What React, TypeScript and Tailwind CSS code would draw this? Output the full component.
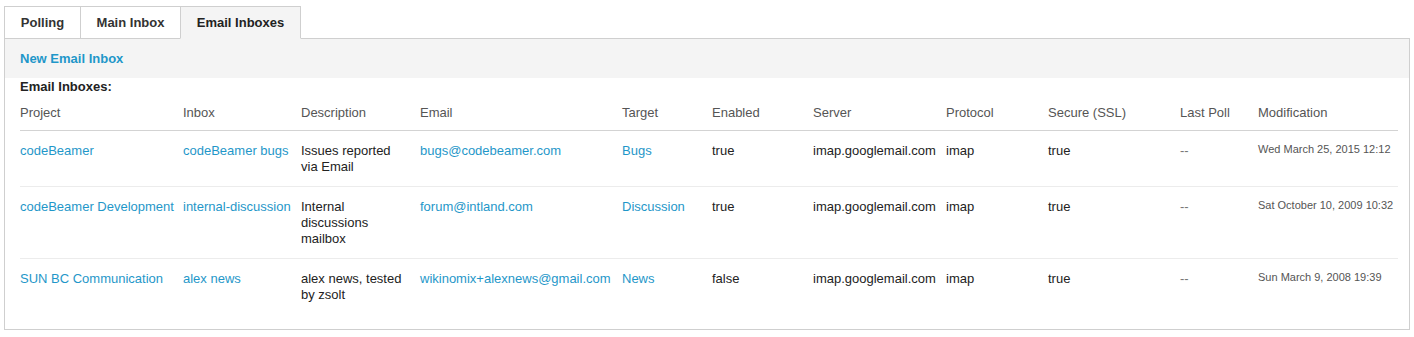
import React from "react";

type Row = {
  project: string;
  inbox: string;
  desc: string;
  email: string;
  target: string;
  enabled: string;
  server: string;
  protocol: string;
  secure: string;
  lastPoll: string;
  mod: string;
};

const rows: Row[] = [
  {
    project: "codeBeamer",
    inbox: "codeBeamer bugs",
    desc: "Issues reported via Email",
    email: "bugs@codebeamer.com",
    target: "Bugs",
    enabled: "true",
    server: "imap.googlemail.com",
    protocol: "imap",
    secure: "true",
    lastPoll: "--",
    mod: "Wed March 25, 2015 12:12",
  },
  {
    project: "codeBeamer Development",
    inbox: "internal-discussion",
    desc: "Internal discussions mailbox",
    email: "forum@intland.com",
    target: "Discussion",
    enabled: "true",
    server: "imap.googlemail.com",
    protocol: "imap",
    secure: "true",
    lastPoll: "--",
    mod: "Sat October 10, 2009 10:32",
  },
  {
    project: "SUN BC Communication",
    inbox: "alex news",
    desc: "alex news, tested by zsolt",
    email: "wikinomix+alexnews@gmail.com",
    target: "News",
    enabled: "false",
    server: "imap.googlemail.com",
    protocol: "imap",
    secure: "true",
    lastPoll: "--",
    mod: "Sun March 9, 2008 19:39",
  },
];

const widths = [163, 118, 119, 202, 90, 101, 133, 102, 132, 78];
const headers = [
  "Project",
  "Inbox",
  "Description",
  "Email",
  "Target",
  "Enabled",
  "Server",
  "Protocol",
  "Secure (SSL)",
  "Last Poll",
  "Modification",
];

const link = "text-[#1f97c9]";
const cell = "pb-[11px] pr-[8px] pt-[12px] align-top";

export default function App() {
  return (
    <div className="min-h-[337px] bg-white px-[4px] pt-[6px] font-['Liberation_Sans',Arial,sans-serif] text-[13px] leading-[16px] text-[#222]">
      <div className="relative z-10 -mb-px flex">
        <div className="flex h-[33px] w-[76px] items-center justify-center border border-r-0 border-[#cfcfcf] bg-white font-bold text-[#333]">
          Polling
        </div>
        <div className="flex h-[33px] w-[100px] items-center justify-center border border-r-0 border-[#cfcfcf] bg-white font-bold text-[#333]">
          Main Inbox
        </div>
        <div className="flex h-[33px] w-[121px] items-center justify-center border border-[#cfcfcf] border-b-[#f4f4f4] bg-[#f4f4f4] font-bold text-[#222]">
          Email Inboxes
        </div>
      </div>
      <div className="border border-[#cfcfcf] pb-[15px]">
        <div className="flex h-[39px] items-center bg-[#f4f4f4] pl-[15px]">
          <span className={`font-bold ${link}`}>New Email Inbox</span>
        </div>
        <div className="pl-[15px] pr-[11px]">
          <div className="h-[17px] pt-[1px] font-bold text-[#222]">Email Inboxes:</div>
          <table className="w-full table-fixed border-collapse">
            <colgroup>
              {widths.map((w, i) => (
                <col key={i} style={{ width: w }} />
              ))}
              <col />
            </colgroup>
            <thead>
              <tr className="border-b border-[#d3d3d3]">
                {headers.map((h) => (
                  <th
                    key={h}
                    className="pb-[9px] pr-[8px] pt-[10px] text-left font-normal text-[#555]"
                  >
                    {h}
                  </th>
                ))}
              </tr>
            </thead>
            <tbody>
              {rows.map((r, i) => (
                <tr
                  key={r.project}
                  className={i < rows.length - 1 ? "border-b border-[#ececec]" : ""}
                >
                  <td className={`${cell} ${link}`}>{r.project}</td>
                  <td className={`${cell} ${link}`}>{r.inbox}</td>
                  <td className="pb-[11px] pr-[12px] pt-[12px] align-top">{r.desc}</td>
                  <td className={`${cell} ${link}`}>{r.email}</td>
                  <td className={`${cell} ${link}`}>{r.target}</td>
                  <td className={cell}>{r.enabled}</td>
                  <td className={cell}>{r.server}</td>
                  <td className={cell}>{r.protocol}</td>
                  <td className={cell}>{r.secure}</td>
                  <td className={`${cell} text-[#777]`}>{r.lastPoll}</td>
                  <td className="pb-[11px] pr-[4px] pt-[12px] align-top">
                    <div className="text-[11px] leading-[13px] text-[#555]">{r.mod}</div>
                  </td>
                </tr>
              ))}
            </tbody>
          </table>
        </div>
      </div>
    </div>
  );
}
